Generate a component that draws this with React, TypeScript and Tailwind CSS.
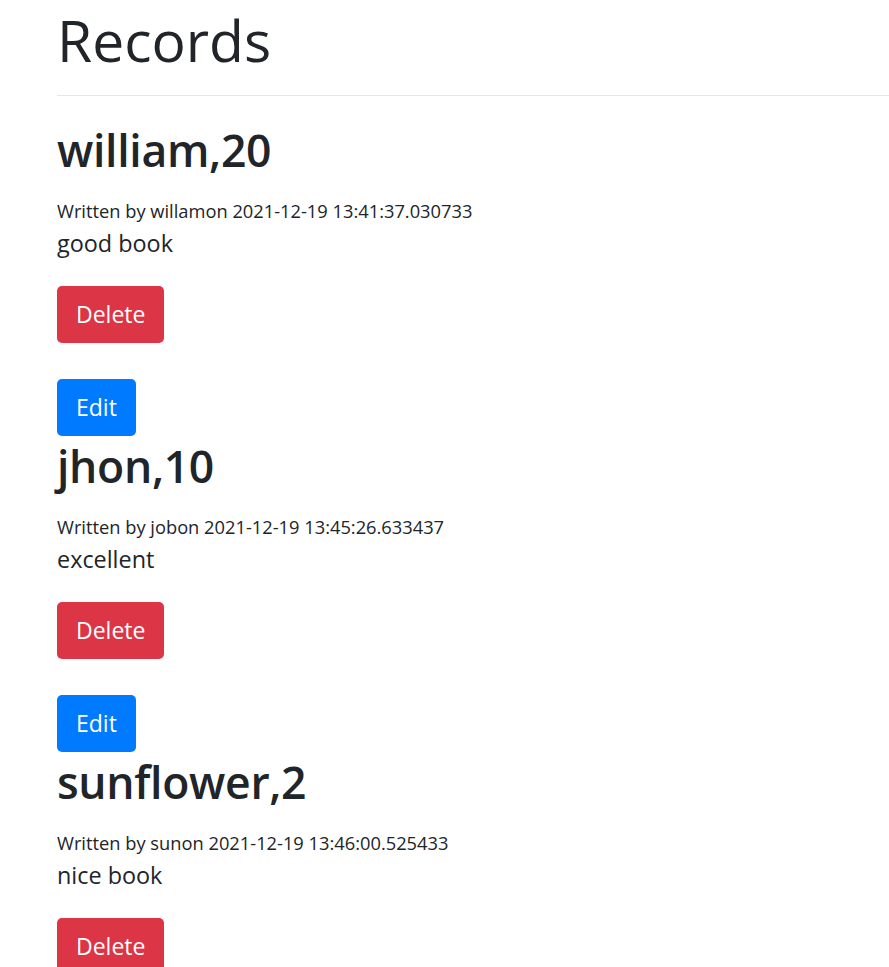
const records = [
  { title: "william,20", author: "willamon", date: "2021-12-19 13:41:37.030733", body: "good book" },
  { title: "jhon,10", author: "jobon", date: "2021-12-19 13:45:26.633437", body: "excellent" },
  { title: "sunflower,2", author: "sunon", date: "2021-12-19 13:46:00.525433", body: "nice book" },
];

export default function App() {
  return (
    <div className="h-screen bg-white text-[#212529] font-['Open_Sans',sans-serif] overflow-hidden">
      <div className="pl-[57px]">
        <h1 className="text-[57px] leading-[68px] font-normal pt-[6px] w-[1200px]">Records</h1>
        <hr className="mt-[21px] mb-[25px] border-0 border-t border-[#e6e6e6]" />
        {records.map((r, i) => (
          <div key={r.title} className={i > 0 ? "mt-px" : ""}>
            <h2 className="text-[44.5px] leading-[58px] font-semibold tracking-[-0.3px] mb-[18px]">{r.title}</h2>
            <div className="text-[18.3px] leading-[28px]">
              Written by {r.author} {r.date}
            </div>
            <p className="text-[23.4px] leading-[35px] mt-px mb-[25px]">{r.body}</p>
            <button className="block h-[57px] px-[19px] bg-[#dc3545] text-white text-[23px] rounded-[5px] mb-[36px]">
              Delete
            </button>
            <button className="block h-[57px] px-[19px] bg-[#007bff] text-white text-[23px] rounded-[5px]">
              Edit
            </button>
          </div>
        ))}
      </div>
    </div>
  );
}
